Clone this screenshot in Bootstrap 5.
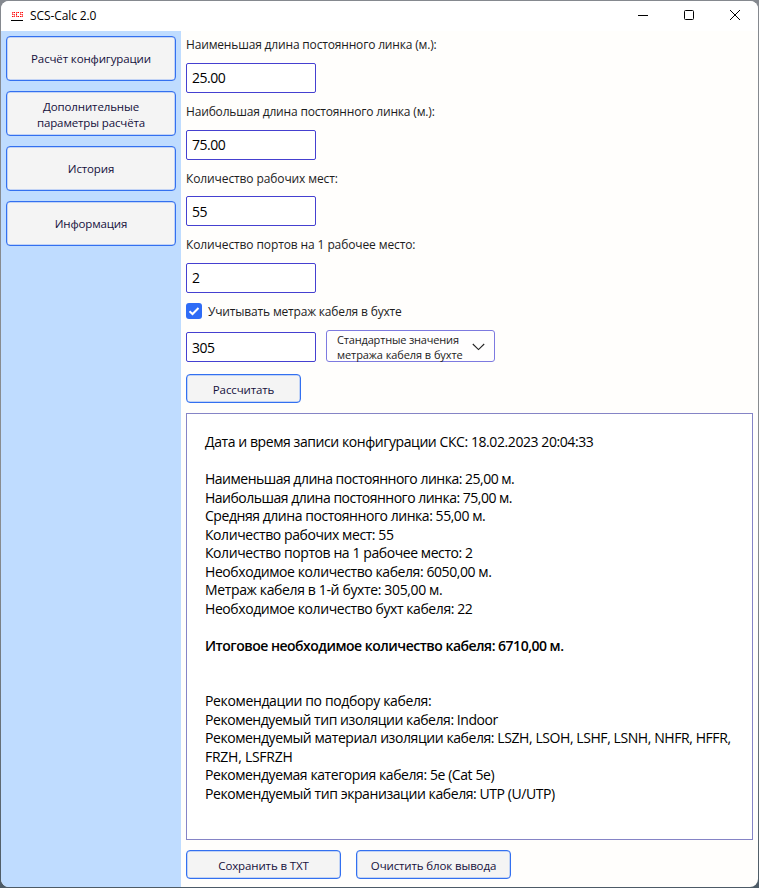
<!DOCTYPE html>
<html lang="ru">
<head>
<meta charset="utf-8">
<title>SCS-Calc 2.0</title>
<link href="https://cdn.jsdelivr.net/npm/bootstrap@5.3.0/dist/css/bootstrap.min.css" rel="stylesheet">
<style>
html, body { height: 888px; overflow: hidden; }
body { background: linear-gradient(#85898f, #8a8d90 60%, #4d5b66); font-family: "Open Sans", "Noto Sans", sans-serif; font-size: 12px; color: #1c1c1c; }
.app-window { width: 757px; height: 886px; margin: 1px; border-radius: 8px; background: #fffefc; }
.title-bar { height: 30px; background: #fff; color: #000; padding: 0 0 2px 10px; font-size: 12px; letter-spacing: -.1px; gap: 6px; }
.win-name { padding-top: 2px; }
.win-btns { gap: 36px; padding-right: 18px; }
.side { width: 180px; background: #bfdcff; padding: 5px; gap: 10px; }
.app-btn { --bs-btn-bg: #f4f4f4; --bs-btn-border-color: #3370f0; --bs-btn-color: #14103c; --bs-btn-padding-x: 0; --bs-btn-padding-y: 0; --bs-btn-font-size: 11.5px; --bs-btn-line-height: 16px; --bs-btn-border-radius: 4px; height: 29px; padding-top: 2px; letter-spacing: -.13px; box-shadow: inset 0 0 0 .5px #8fb2f6; }
.btn-run { margin: 12px 0 10px; width: 115px; }
.side .app-btn { height: 45px; padding-top: 1px; }
.side .two-line { padding-top: 3px; }
.content { padding: 5px 5px 0; }
.field { height: 66.6px; }
.field label { height: 27px; line-height: 18px; }
.app-input { width: 130px; height: 30px; min-height: 0; padding: 0 5px 1px; border: 1px solid #4540d0; border-radius: 2px; font-size: 14px; letter-spacing: -.48px; color: #000; background: #fff; }
.low { padding-top: 1px; }
.check-row { height: 16px; margin-top: 1px; gap: 6px; }
.app-check { width: 16px; height: 16px; border-radius: 3px; background: #2f6cf6; }
.coil-row { gap: 10px; margin-top: 11px; }
.combo { width: 169px; height: 32px; border: 1px solid #7d7ae0; border-radius: 3px; background: #fffefe; line-height: 15px; font-size: 11px; letter-spacing: -.08px; padding: 1px 9px 0 10px; }
.result { height: 427px; border: 1px solid #8584c6; background: #fff; color: #000; font-size: 14px; line-height: 18.5px; padding: 19px 18px; letter-spacing: -.42px; white-space: nowrap; }
.result p { height: 18.5px; margin: 0; }
.result .strong-line { font-weight: 600; }
.actions { gap: 15px; margin-top: 10px; }
.actions .app-btn { width: 155px; }
.ls-1 { letter-spacing: -.11px; } .ls-2 { letter-spacing: -.17px; }
.result .out-0 { letter-spacing: -.26px; } .result .out-1 { letter-spacing: -.36px; } .result .out-3 { letter-spacing: -.45px; } .result .out-4 { letter-spacing: -.5px; }
</style>
<script src="https://cdn.jsdelivr.net/npm/bootstrap@5.3.0/dist/js/bootstrap.bundle.min.js"></script>
</head>
<body>
<div class="app-window d-flex flex-column overflow-hidden">
  <header class="title-bar d-flex align-items-center flex-shrink-0">
    <svg width="13" height="12" viewBox="0 0 13 12"><g fill="none" stroke="#f00"><path d="M4 3.5H1.5V5.5H3.5V7.5H1M8 3.5H5.5V7.5H8M12 3.5H9.5V5.5H11.5V7.5H9" stroke-dasharray="1.5 .5"/></g><path d="M0 11h12v1H0z"/></svg>
    <span class="win-name">SCS-Calc 2.0</span>
    <div class="win-btns ms-auto d-flex align-items-center">
      <svg width="10" height="10"><path d="M0 5.5h10" stroke="#000"/></svg>
      <svg width="10" height="10"><rect x=".5" y=".5" width="9" height="9" rx="1" fill="none" stroke="#000"/></svg>
      <svg width="10" height="10"><path d="M0 0L10 10M10 0L0 10" stroke="#000"/></svg>
    </div>
  </header>
  <div class="d-flex flex-grow-1">
    <nav class="side d-flex flex-column flex-shrink-0">
      <button class="btn app-btn">Расчёт конфигурации</button>
      <button class="btn app-btn two-line">Дополнительные<br>параметры расчёта</button>
      <button class="btn app-btn">История</button>
      <button class="btn app-btn">Информация</button>
    </nav>
    <main class="content flex-grow-1">
      <div class="field"><label class="d-block ls-2" for="min-len">Наименьшая длина постоянного линка (м.):</label><input id="min-len" class="form-control app-input" value="25.00"></div>
      <div class="field"><label class="d-block ls-2" for="max-len">Наибольшая длина постоянного линка (м.):</label><input id="max-len" class="form-control app-input low" value="75.00"></div>
      <div class="field"><label class="d-block ls-1 low" for="places">Количество рабочих мест:</label><input id="places" class="form-control app-input low" value="55"></div>
      <div class="field"><label class="d-block ls-1" for="ports">Количество портов на 1 рабочее место:</label><input id="ports" class="form-control app-input low" value="2"></div>
      <div class="check-row d-flex align-items-center"><span class="app-check d-flex"><svg width="16" height="16"><path d="M3.5 8.3L6.5 11L12.5 5" fill="none" stroke="#fff" stroke-width="2"/></svg></span><span class="ls-2 low">Учитывать метраж кабеля в бухте</span></div>
      <div class="coil-row d-flex align-items-end">
        <input class="form-control app-input low" value="305">
        <div class="combo d-flex justify-content-between align-items-center text-nowrap"><div><span class="ls-2">Стандартные значения</span><br>метража кабеля в бухте</div><svg width="13" height="8"><path d="M.8 1L6.5 6.6L12.2 1" fill="none" stroke="#222" stroke-width="1.1"/></svg></div>
      </div>
      <button class="btn app-btn btn-run d-block">Рассчитать</button>
      <div class="result">
        <p>Дата и время записи конфигурации СКС: 18.02.2023 20:04:33</p><p></p>
        <p class="out-4">Наименьшая длина постоянного линка: 25,00 м.</p>
        <p class="out-4">Наибольшая длина постоянного линка: 75,00 м.</p>
        <p class="out-3">Средняя длина постоянного линка: 55,00 м.</p>
        <p>Количество рабочих мест: 55</p>
        <p>Количество портов на 1 рабочее место: 2</p>
        <p>Необходимое количество кабеля: 6050,00 м.</p>
        <p class="out-1">Метраж кабеля в 1-й бухте: 305,00 м.</p>
        <p>Необходимое количество бухт кабеля: 22</p><p></p>
        <p class="strong-line out-4">Итоговое необходимое количество кабеля: 6710,00 м.</p><p></p><p></p>
        <p class="out-1">Рекомендации по подбору кабеля:</p>
        <p class="out-3">Рекомендуемый тип изоляции кабеля: Indoor</p>
        <p>Рекомендуемый материал изоляции кабеля: LSZH, LSOH, LSHF, LSNH, NHFR, HFFR,</p>
        <p class="out-0">FRZH, LSFRZH</p>
        <p>Рекомендуемая категория кабеля: 5e (Cat 5e)</p>
        <p>Рекомендуемый тип экранизации кабеля: UTP (U/UTP)</p>
      </div>
      <div class="actions d-flex"><button class="btn app-btn">Сохранить в TXT</button><button class="btn app-btn">Очистить блок вывода</button></div>
    </main>
  </div>
</div>
</body>
</html>
